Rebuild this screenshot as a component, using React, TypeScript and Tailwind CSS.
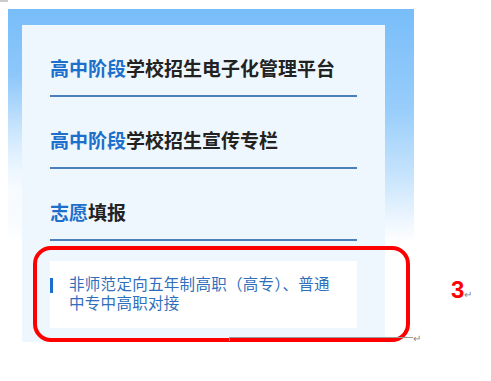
import React from "react";

const cjk = { fontFamily: '"Noto Sans CJK SC", "Noto Sans", sans-serif' };

const Heading: React.FC<{ blue: string; rest: string; first?: boolean }> = ({ blue, rest, first }) => (
  <div
    className={`border-b-2 border-[#4c80b8] pb-[13px] text-[19px] font-bold leading-[28px] ${first ? "" : "mt-[29px]"}`}
  >
    <span className="text-[#1c6fca]">{blue}</span>
    <span className="text-[#222]">{rest}</span>
  </div>
);

export default function App() {
  return (
    <div className="relative h-[381px] w-[491px] overflow-hidden bg-white" style={cjk}>
      <div className="absolute left-0 top-0 h-[2px] w-[8px] bg-[#cccccc]" />

      <div className="pl-[8px] pt-[9px]">
        <div className="w-[406px] bg-[radial-gradient(ellipse_at_0%_55%,rgba(255,255,255,0.85),rgba(255,255,255,0)_45%),linear-gradient(to_bottom,#78bdf9_0%,#98cdfb_30%,#c6e4fc_50%,#e9f4fe_62%,#ffffff_70%)] pl-[14px] pt-[16px]">
          <div className="w-[363px] bg-[#eff7fe] px-[28px] pb-[14px] pt-[29px]">
            <Heading first blue="高中阶段" rest="学校招生电子化管理平台" />
            <Heading blue="高中阶段" rest="学校招生宣传专栏" />
            <Heading blue="志愿" rest="填报" />

            <div className="mt-[20px] flex h-[67px] bg-white pt-[13px]">
              <span className="mt-[4px] h-[15px] w-[3px] bg-[#1c6fca]" />
              <p className="ml-[16px] w-[264px] text-[15.5px] leading-[19px] tracking-[0.3px] text-[#2f6fbb]">
                非师范定向五年制高职（高专）、普通中专中高职对接
              </p>
            </div>
          </div>
        </div>
      </div>

      {/* annotation overlays */}
      <div className="absolute left-[33px] top-[246px] h-[96px] w-[377px] rounded-[18px] border-4 border-[#ff0000]" />
      <div className="absolute left-[229px] top-[337px] h-[4px] w-[184px] border-l border-t border-[#9a9a9a]" />
      <span className="absolute left-[413px] top-[330px] text-[10px] text-[#888]">↵</span>
      <div
        className="absolute left-[451px] top-[276px] flex items-baseline text-[24px] font-bold leading-[28px] text-[#ff0000]"
        style={{ fontFamily: '"Liberation Sans", Arial, sans-serif' }}
      >
        3<span className="text-[10px] font-normal text-[#888]">↵</span>
      </div>
    </div>
  );
}
